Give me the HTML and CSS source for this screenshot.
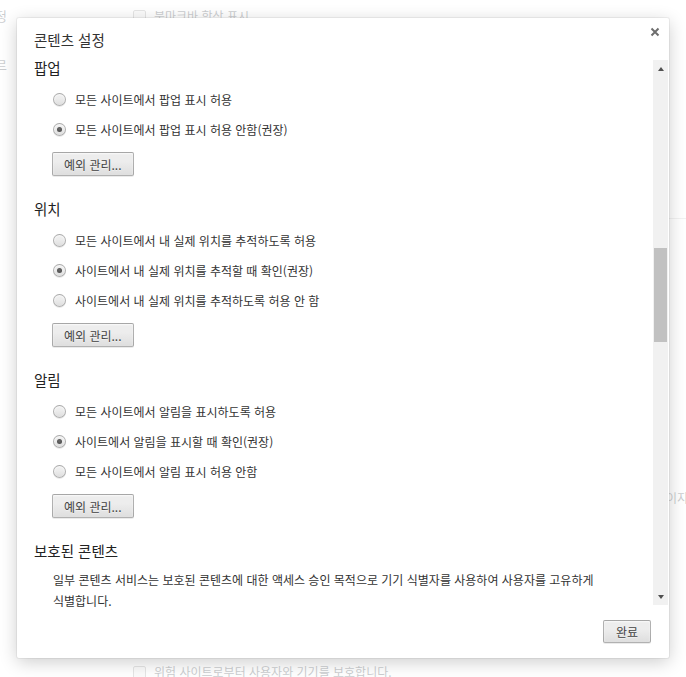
FILE: index.html
```html
<!DOCTYPE html>
<html lang="ko">
<head>
    <meta charset="UTF-8">
    <meta name="viewport" content="width=device-width, initial-scale=1.0">
    <title>설정 - 콘텐츠 설정</title>
    <link rel="stylesheet" href="styles.css">
</head>
<body>
    <!-- Settings page behind the dialog (dimmed by the overlay) -->
    <div class="settings-page">
        <div class="bg-row">
            <span class="bg-side">기본 설정</span>
            <span class="bg-main"><span class="bg-check"></span>북마크바 항상 표시</span>
        </div>
        <div class="bg-row bg-row-second">
            <span class="bg-side">브라우저 고르</span>
        </div>
        <div class="bg-separator"></div>
        <div class="bg-row bg-row-note">
            <span class="bg-note">페이지</span>
        </div>
        <div class="bg-row bg-row-last">
            <span class="bg-side"></span>
            <span class="bg-main"><span class="bg-check"></span>위험 사이트로부터 사용자와 기기를 보호합니다.</span>
        </div>
    </div>

    <div class="overlay"></div>

    <div class="dialog">
        <div class="dialog-head">
            <h2 class="dialog-title">콘텐츠 설정</h2>
            <button class="close-btn" aria-label="닫기">
                <svg width="10" height="10" viewBox="0 0 10 10"><path d="M1.5 1.5 L8.5 8.5 M8.5 1.5 L1.5 8.5" stroke="#6e6e6e" stroke-width="2" fill="none"/></svg>
            </button>
        </div>

        <div class="dialog-body">
            <div class="content">
                <section class="group">
                    <h3 class="group-title">팝업</h3>
                    <div class="options">
                        <label class="option"><input type="radio" name="popups"> 모든 사이트에서 팝업 표시 허용</label>
                        <label class="option"><input type="radio" name="popups" checked> 모든 사이트에서 팝업 표시 허용 안함(권장)</label>
                    </div>
                    <button class="btn btn-exceptions">예외 관리...</button>
                </section>

                <section class="group">
                    <h3 class="group-title">위치</h3>
                    <div class="options">
                        <label class="option"><input type="radio" name="location"> 모든 사이트에서 내 실제 위치를 추적하도록 허용</label>
                        <label class="option"><input type="radio" name="location" checked> 사이트에서 내 실제 위치를 추적할 때 확인(권장)</label>
                        <label class="option"><input type="radio" name="location"> 사이트에서 내 실제 위치를 추적하도록 허용 안 함</label>
                    </div>
                    <button class="btn btn-exceptions">예외 관리...</button>
                </section>

                <section class="group">
                    <h3 class="group-title">알림</h3>
                    <div class="options">
                        <label class="option"><input type="radio" name="notifications"> 모든 사이트에서 알림을 표시하도록 허용</label>
                        <label class="option"><input type="radio" name="notifications" checked> 사이트에서 알림을 표시할 때 확인(권장)</label>
                        <label class="option"><input type="radio" name="notifications"> 모든 사이트에서 알림 표시 허용 안함</label>
                    </div>
                    <button class="btn btn-exceptions">예외 관리...</button>
                </section>

                <section class="group">
                    <h3 class="group-title">보호된 콘텐츠</h3>
                    <p class="group-text">일부 콘텐츠 서비스는 보호된 콘텐츠에 대한 액세스 승인 목적으로 기기 식별자를 사용하여 사용자를 고유하게 식별합니다.</p>
                </section>
            </div>

            <div class="scrollbar">
                <span class="scroll-arrow"><span class="arrow-up"></span></span>
                <span class="scroll-thumb"></span>
                <span class="scroll-arrow scroll-arrow-down"><span class="arrow-down"></span></span>
            </div>
        </div>

        <div class="dialog-foot">
            <button class="btn btn-done">완료</button>
        </div>
    </div>
</body>
</html>
```

FILE: styles.css
```css
/* Basic reset */
html, body {
    margin: 0;
    padding: 0;
}

body {
    font-family: "Noto Sans CJK KR", "Noto Sans", sans-serif;
    font-size: 12px;
    color: #303942;
    background: #fff;
    width: 686px;
    height: 677px;
    overflow: hidden;
    position: relative;
}

/* Settings page in the background */
.settings-page {
    padding-top: 8px;
}

.bg-row {
    display: flex;
    align-items: center;
    height: 16px;
    line-height: 16px;
    white-space: nowrap;
}

.bg-row-second {
    margin-top: 33px;
}

.bg-row-note {
    margin-top: 271px;
}

.bg-row-last {
    margin-top: 158px;
}

.bg-side {
    width: 7px;
    display: flex;
    justify-content: flex-end;
    font-size: 13px;
}

.bg-main {
    margin-left: 126px;
    display: flex;
    align-items: center;
    gap: 8px;
}

.bg-check {
    width: 11px;
    height: 11px;
    border: 1px solid #999;
    border-radius: 2px;
    background: #eee;
}

.bg-separator {
    height: 1px;
    margin: 145px 0 0 133px;
    background: #ccc;
}

.bg-note {
    padding-left: 655px;
}

.overlay {
    position: absolute;
    top: 0;
    left: 0;
    right: 0;
    bottom: 0;
    background: rgba(255, 255, 255, 0.75);
}

/* Dialog */
.dialog {
    position: absolute;
    left: 17px;
    top: 18px;
    width: 652px;
    height: 640px;
    background: #fff;
    border-radius: 2px;
    box-shadow: 0 4px 18px rgba(0, 0, 0, 0.2), 0 0 0 1px rgba(0, 0, 0, 0.05);
    display: flex;
    flex-direction: column;
}

.dialog-head {
    padding: 12px 17px 10px;
}

.dialog-title {
    margin: 0;
    font-size: 14.5px;
    line-height: 20px;
    font-weight: normal;
    color: #333;
}

.close-btn {
    position: absolute;
    top: 9px;
    right: 9px;
    width: 10px;
    height: 10px;
    padding: 0;
    border: none;
    background: none;
    display: flex;
}

.dialog-body {
    flex: 1;
    display: flex;
    min-height: 0;
}

.content {
    flex: 1;
    padding-left: 17px;
    margin-top: -1px;
}

.group + .group {
    margin-top: 24px;
}

.group-title {
    margin: 0;
    font-size: 14.5px;
    line-height: 18px;
    font-weight: normal;
    color: #222;
}

.options {
    margin-top: 7px;
    padding-left: 19px;
}

.option {
    display: flex;
    align-items: center;
    gap: 9px;
    height: 30px;
    color: #333;
    white-space: nowrap;
}

.option input {
    appearance: none;
    -webkit-appearance: none;
    position: relative;
    width: 13px;
    height: 13px;
    margin: 0;
    border: 1px solid rgba(0, 0, 0, 0.25);
    border-radius: 50%;
    background: linear-gradient(#ededed, #ededed 38%, #dedede);
    box-shadow: 0 1px 0 rgba(0, 0, 0, 0.08), inset 0 1px 2px rgba(255, 255, 255, 0.75);
}

.option input:checked::after {
    content: '';
    position: absolute;
    left: 3px;
    top: 3px;
    width: 5px;
    height: 5px;
    border-radius: 50%;
    background: radial-gradient(circle at 50% 40%, #6a6a6a, #444);
}

.group-text {
    margin: 9px 0 0;
    padding: 0 10px 0 19px;
    line-height: 21px;
    color: #333;
    word-break: keep-all;
}

/* Chrome-style grey buttons */
.btn {
    font-family: inherit;
    font-size: 12px;
    height: 24px;
    padding: 0 11px;
    border: 1px solid rgba(0, 0, 0, 0.25);
    border-radius: 2px;
    background: linear-gradient(#ededed, #ededed 38%, #dedede);
    box-shadow: 0 1px 0 rgba(0, 0, 0, 0.08), inset 0 1px 2px rgba(255, 255, 255, 0.75);
    color: #444;
    text-shadow: 0 1px 0 #f0f0f0;
}

.btn-exceptions {
    display: block;
    margin: 8px 0 0 18px;
}

.btn-done {
    height: 23px;
    padding: 0 12px;
}

/* Hand-drawn scrollbar */
.scrollbar {
    width: 15px;
    margin-right: 1px;
    background: #f1f1f1;
    display: flex;
    flex-direction: column;
    align-items: center;
}

.scroll-arrow {
    height: 17px;
    display: flex;
    align-items: center;
    justify-content: center;
}

.scroll-arrow-down {
    margin-top: auto;
}

.arrow-up {
    border-left: 3.5px solid transparent;
    border-right: 3.5px solid transparent;
    border-bottom: 4px solid #505050;
}

.arrow-down {
    border-left: 3.5px solid transparent;
    border-right: 3.5px solid transparent;
    border-top: 4px solid #505050;
}

.scroll-thumb {
    width: 13px;
    height: 94px;
    margin-top: 171px;
    background: #c1c1c1;
}

.dialog-foot {
    display: flex;
    justify-content: flex-end;
    padding: 15px 18px 15px;
}
```
